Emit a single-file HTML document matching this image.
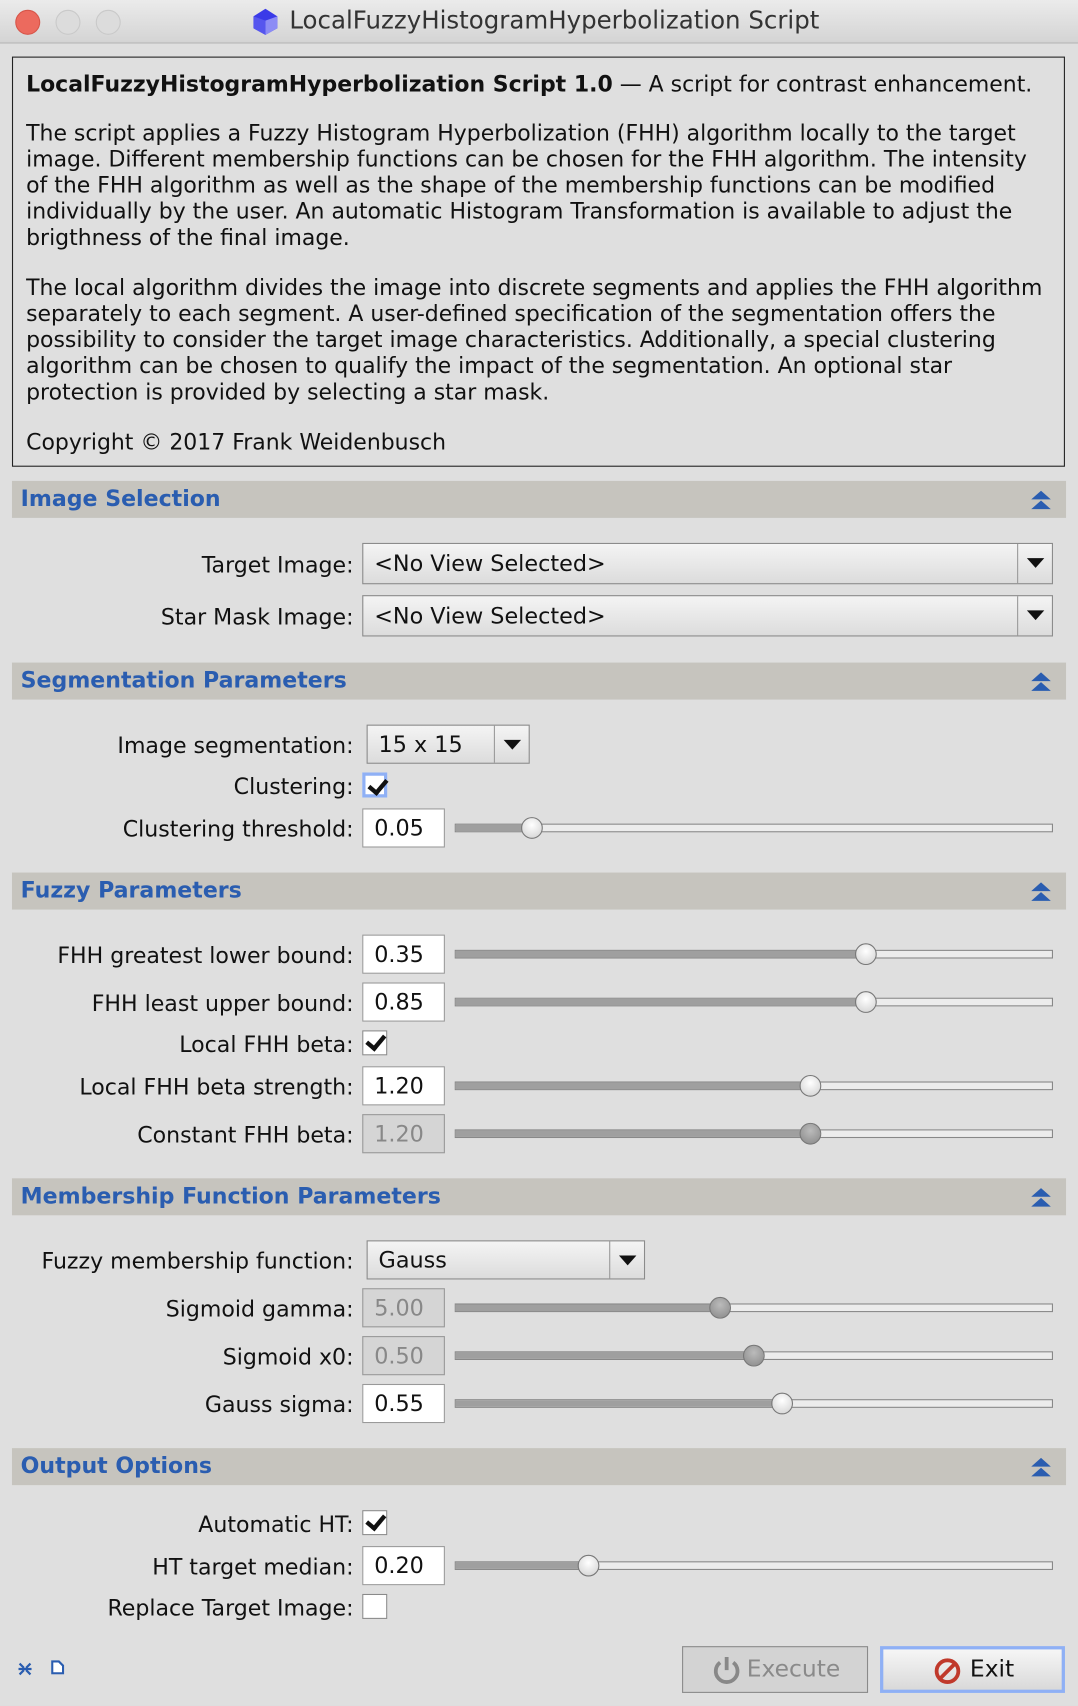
<!DOCTYPE html>
<html><head><meta charset="utf-8"><style>
*{margin:0;padding:0;box-sizing:border-box}
html,body{width:1078px;height:1706px;overflow:hidden;background:#dfdfdf}
#w{position:absolute;left:0;top:0;width:991px;height:1568px;transform:scale(1.0878,1.088);transform-origin:0 0;font-family:"DejaVu Sans","Liberation Sans",sans-serif;color:#111;background:#dfdfdf}
.a{position:absolute}
.tb{left:0;top:0;width:991px;height:40px;background:linear-gradient(#ebebeb,#d4d4d4);border-bottom:1px solid #b5b5b5}
.dot{width:23px;height:23px;border-radius:50%;top:9px;border:1px solid #c9c9c9;background:#dcdcdc}
.info{left:11px;top:52px;width:968px;height:377px;border:1.5px solid #222;padding:0 12px}
.info div{position:absolute;left:12px;font-size:20.2px;white-space:nowrap;line-height:24px}
.hd{left:11px;width:969px;height:34px;background:#c6c4be}
.hd span{position:absolute;left:8px;top:4px;font-size:20.3px;font-weight:bold;color:#2a5db0}
.hd svg{position:absolute;right:13px;top:7px}
.lb{font-size:20.3px;white-space:nowrap;text-align:right;right:666px;line-height:24px}
.cb{border:1px solid #8b8b8b;background:linear-gradient(#f4f4f4,#dcdcdc);font-size:20.5px;padding-left:10px;line-height:36px}
.cb i{position:absolute;right:0;top:0;bottom:0;width:32px;border-left:1px solid #999}
.cb i:after{content:"";position:absolute;left:8px;top:13px;border-left:8px solid transparent;border-right:8px solid transparent;border-top:9px solid #111}
.ed{left:333px;width:76px;height:36px;border:1.5px solid #999;background:#fff;font-size:20.5px;padding-left:10px;line-height:34px}
.ed.dis{background:#d5d5d5;color:#888}
.tr{left:418px;width:550px;height:8px;border:1px solid #888;background:#ececec}
.tr b{position:absolute;left:0;top:0;bottom:0;background:#9f9f9f}
.hn{width:20px;height:20px;border-radius:50%;border:1px solid #777;background:radial-gradient(circle at 50% 35%,#fff,#cfcfcf)}
.ck{left:333px;width:23px;height:23px;border:1.5px solid #8a8a8a;background:#fff}
.ck.on:after{content:"";position:absolute;left:6px;top:0px;width:7px;height:13px;border:solid #111;border-width:0 4px 4px 0;transform:rotate(40deg)}
.btn{height:43px;font-size:21.5px;line-height:41px;text-align:center}
</style></head><body><div id="w">
<div class="a tb"></div>
<div class="a dot" style="left:14px;background:#ec6a5e;border-color:#d75549"></div>
<div class="a dot" style="left:51px"></div>
<div class="a dot" style="left:88px"></div>
<svg class="a" style="left:232px;top:7px" width="24" height="26" viewBox="0 0 24 26"><polygon points="12,1 23,8 23,19 12,25 1,19 1,8" fill="#3a3ae8"/><polygon points="12,12 23,8 23,19 12,25" fill="#8c8cf5"/><polygon points="1,8 12,12 12,25 1,19" fill="#5656ee"/></svg>
<div class="a" style="left:266px;top:6px;font-size:22.5px;color:#333;white-space:nowrap">LocalFuzzyHistogramHyperbolization Script</div>

<div class="a info">
<div style="top:12px"><b>LocalFuzzyHistogramHyperbolization Script 1.0</b> — A script for contrast enhancement.</div>
<div style="top:57px">The script applies a Fuzzy Histogram Hyperbolization (FHH) algorithm locally to the target</div>
<div style="top:81px">image. Different membership functions can be chosen for the FHH algorithm. The intensity</div>
<div style="top:105px">of the FHH algorithm as well as the shape of the membership functions can be modified</div>
<div style="top:129px">individually by the user. An automatic Histogram Transformation is available to adjust the</div>
<div style="top:153px">brigthness of the final image.</div>
<div style="top:199px">The local algorithm divides the image into discrete segments and applies the FHH algorithm</div>
<div style="top:223px">separately to each segment. A user-defined specification of the segmentation offers the</div>
<div style="top:247px">possibility to consider the target image characteristics. Additionally, a special clustering</div>
<div style="top:271px">algorithm can be chosen to qualify the impact of the segmentation. An optional star</div>
<div style="top:295px">protection is provided by selecting a star mask.</div>
<div style="top:341px">Copyright © 2017 Frank Weidenbusch</div>
</div>

<div class="a hd" style="top:442px"><span>Image Selection</span><svg width="20" height="20"><path d="M1 10 L10 2 L19 10 Z M1 19 L10 11 L19 19 Z" fill="#2a5db0"/></svg></div>
<div class="a hd" style="top:609px"><span>Segmentation Parameters</span><svg width="20" height="20"><path d="M1 10 L10 2 L19 10 Z M1 19 L10 11 L19 19 Z" fill="#2a5db0"/></svg></div>
<div class="a hd" style="top:802px"><span>Fuzzy Parameters</span><svg width="20" height="20"><path d="M1 10 L10 2 L19 10 Z M1 19 L10 11 L19 19 Z" fill="#2a5db0"/></svg></div>
<div class="a hd" style="top:1083px"><span>Membership Function Parameters</span><svg width="20" height="20"><path d="M1 10 L10 2 L19 10 Z M1 19 L10 11 L19 19 Z" fill="#2a5db0"/></svg></div>
<div class="a hd" style="top:1331px"><span>Output Options</span><svg width="20" height="20"><path d="M1 10 L10 2 L19 10 Z M1 19 L10 11 L19 19 Z" fill="#2a5db0"/></svg></div>

<div class="a lb" style="top:507px">Target Image:</div>
<div class="a cb" style="left:333px;top:499px;width:635px;height:38px">&lt;No View Selected&gt;<i></i></div>
<div class="a lb" style="top:555px">Star Mask Image:</div>
<div class="a cb" style="left:333px;top:547px;width:635px;height:38px">&lt;No View Selected&gt;<i></i></div>

<div class="a lb" style="top:673px">Image segmentation:</div>
<div class="a cb" style="left:337px;top:666px;width:150px;height:36px;line-height:34px">15 x 15<i></i></div>
<div class="a lb" style="top:711px">Clustering:</div>
<div class="a ck on" style="top:710px;border:3px solid #8fb0f5"></div>
<div class="a lb" style="top:750px">Clustering threshold:</div>
<div class="a ed" style="top:743px">0.05</div>
<div class="a tr" style="top:757px"><b style="width:71px"></b></div>
<div class="a hn" style="left:479px;top:751px"></div>

<div class="a lb" style="top:866px">FHH greatest lower bound:</div>
<div class="a ed" style="top:859px">0.35</div>
<div class="a tr" style="top:873px"><b style="width:378px"></b></div>
<div class="a hn" style="left:786px;top:867px"></div>
<div class="a lb" style="top:910px">FHH least upper bound:</div>
<div class="a ed" style="top:903px">0.85</div>
<div class="a tr" style="top:917px"><b style="width:378px"></b></div>
<div class="a hn" style="left:786px;top:911px"></div>
<div class="a lb" style="top:948px">Local FHH beta:</div>
<div class="a ck on" style="top:947px"></div>
<div class="a lb" style="top:987px">Local FHH beta strength:</div>
<div class="a ed" style="top:980px">1.20</div>
<div class="a tr" style="top:994px"><b style="width:327px"></b></div>
<div class="a hn" style="left:735px;top:988px"></div>
<div class="a lb" style="top:1031px">Constant FHH beta:</div>
<div class="a ed dis" style="top:1024px">1.20</div>
<div class="a tr" style="top:1038px"><b style="width:327px"></b></div>
<div class="a hn" style="left:735px;top:1032px;background:radial-gradient(circle at 50% 35%,#bbb,#888)"></div>

<div class="a lb" style="top:1147px">Fuzzy membership function:</div>
<div class="a cb" style="left:337px;top:1140px;width:256px;height:36px;line-height:34px">Gauss<i></i></div>
<div class="a lb" style="top:1191px">Sigmoid gamma:</div>
<div class="a ed dis" style="top:1184px">5.00</div>
<div class="a tr" style="top:1198px"><b style="width:244px"></b></div>
<div class="a hn" style="left:652px;top:1192px;background:radial-gradient(circle at 50% 35%,#bbb,#888)"></div>
<div class="a lb" style="top:1235px">Sigmoid x0:</div>
<div class="a ed dis" style="top:1228px">0.50</div>
<div class="a tr" style="top:1242px"><b style="width:275px"></b></div>
<div class="a hn" style="left:683px;top:1236px;background:radial-gradient(circle at 50% 35%,#bbb,#888)"></div>
<div class="a lb" style="top:1279px">Gauss sigma:</div>
<div class="a ed" style="top:1272px">0.55</div>
<div class="a tr" style="top:1286px"><b style="width:301px"></b></div>
<div class="a hn" style="left:709px;top:1280px"></div>

<div class="a lb" style="top:1389px">Automatic HT:</div>
<div class="a ck on" style="top:1388px"></div>
<div class="a lb" style="top:1428px">HT target median:</div>
<div class="a ed" style="top:1421px">0.20</div>
<div class="a tr" style="top:1435px"><b style="width:123px"></b></div>
<div class="a hn" style="left:531px;top:1429px"></div>
<div class="a lb" style="top:1466px">Replace Target Image:</div>
<div class="a ck" style="top:1465px"></div>

<svg class="a" style="left:16px;top:1527px" width="14" height="14"><path d="M2 2 L6 6 M12 2 L8 6 M2 12 L6 8 M12 12 L8 8 M1 7 H13" stroke="#2a5db0" stroke-width="2" fill="none"/></svg>
<svg class="a" style="left:47px;top:1526px" width="12" height="13"><path d="M1 1 H7 L11 5 V12 H1 Z" stroke="#2a5db0" stroke-width="2" fill="#fff"/></svg>
<div class="a btn" style="left:627px;top:1513px;width:171px;border:1.5px solid #8a8a8a;background:#d3d3d3;color:#8a8a8a;padding-left:34px">Execute
<svg style="position:absolute;left:26px;top:7px" width="28" height="28" viewBox="0 0 28 28"><path d="M8 7 A10 10 0 1 0 20 7" stroke="#888" stroke-width="3.5" fill="none"/><path d="M14 2 V14" stroke="#888" stroke-width="3.5"/></svg></div>
<div class="a btn" style="left:809px;top:1513px;width:170px;border:3px solid #8fb0f5;background:linear-gradient(#f6f6f6,#d9d9d9);padding-left:36px;line-height:37px">Exit
<svg style="position:absolute;left:46px;top:7px" width="26" height="26" viewBox="0 0 26 26"><circle cx="13" cy="13" r="10" stroke="#c0392b" stroke-width="3.5" fill="none"/><path d="M7 19 L19 7" stroke="#c0392b" stroke-width="3.5"/></svg></div>
</div></body></html>
